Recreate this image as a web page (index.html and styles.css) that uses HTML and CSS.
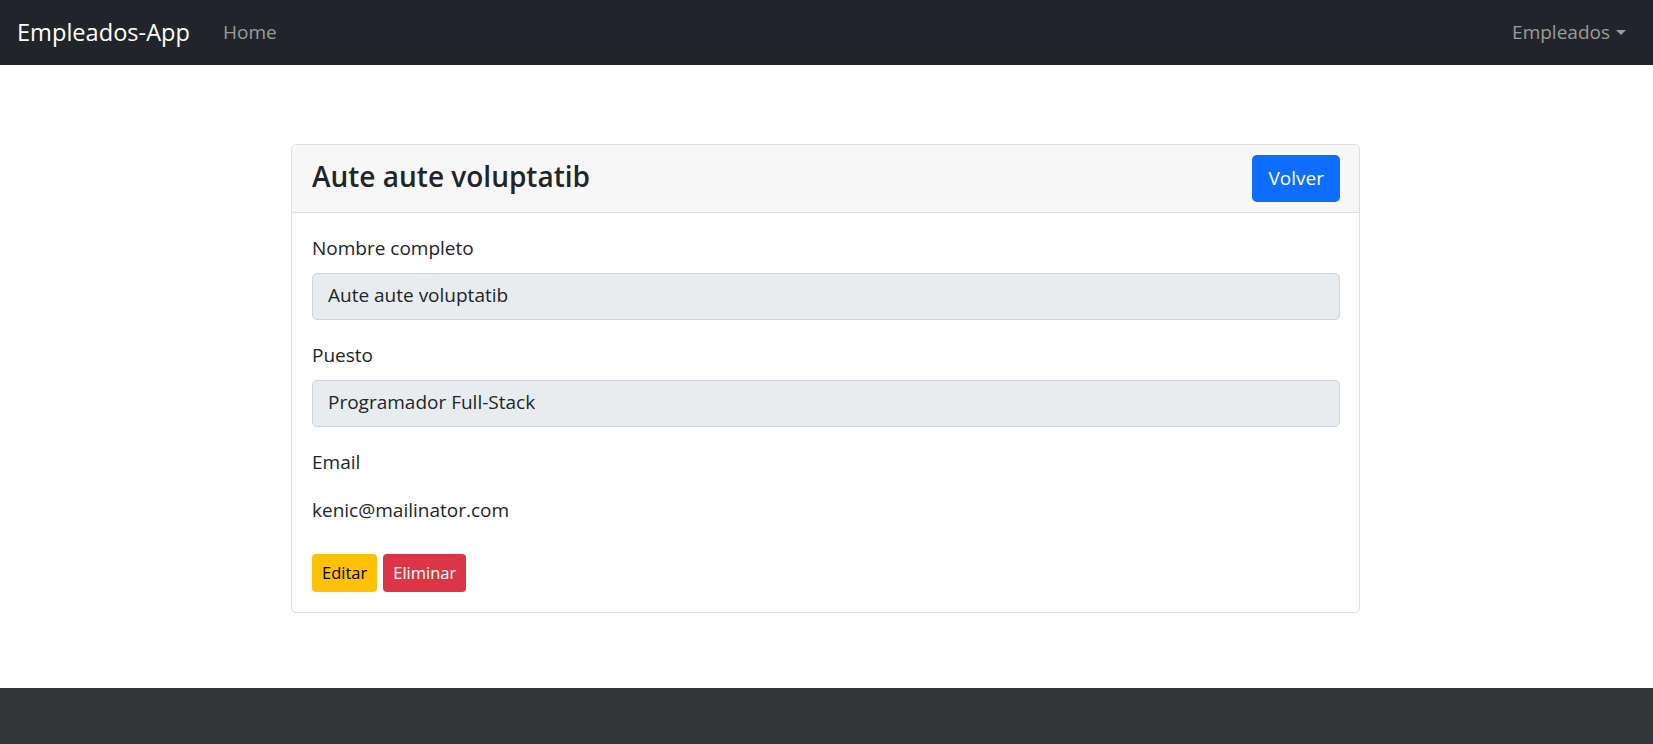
FILE: index.html
```html
<!DOCTYPE html>
<html lang="es">
<head>
<meta charset="utf-8">
<title>Empleados-App</title>
<link rel="stylesheet" href="styles.css">
</head>
<body>
<nav class="navbar">
  <div class="nav-left">
    <a class="brand" href="#">Empleados-App</a>
    <a class="nav-link" href="#">Home</a>
  </div>
  <div class="nav-right">
    <a class="nav-link dropdown" href="#">Empleados<span class="caret"></span></a>
  </div>
</nav>
<main class="main">
  <div class="card">
    <div class="card-header">
      <h4 class="card-title">Aute aute voluptatib</h4>
      <a class="btn btn-primary" href="#">Volver</a>
    </div>
    <div class="card-body">
      <div class="field">
        <label class="label">Nombre completo</label>
        <div class="input">Aute aute voluptatib</div>
      </div>
      <div class="field">
        <label class="label">Puesto</label>
        <div class="input">Programador Full-Stack</div>
      </div>
      <div class="field">
        <label class="label">Email</label>
        <p class="plaintext">kenic@mailinator.com</p>
      </div>
      <div class="actions">
        <a class="btn-sm btn-warning" href="#">Editar</a>
        <a class="btn-sm btn-danger" href="#">Eliminar</a>
      </div>
    </div>
  </div>
</main>
<footer class="footer"></footer>
</body>
</html>
```

FILE: styles.css
```css
* { box-sizing: border-box; }
html, body { margin: 0; padding: 0; }
body {
  font-family: "Open Sans", "Noto Sans", "Liberation Sans", sans-serif;
  font-size: 19px;
  line-height: 1.5;
  color: #212529;
  background: #fff;
}
a { text-decoration: none; }

.navbar {
  height: 65px;
  background: #212529;
  display: flex;
  align-items: center;
  justify-content: space-between;
  padding: 0 15px;
}
.nav-left { display: flex; align-items: center; }
.brand {
  color: #fff;
  font-size: 23.6px;
  padding-left: 2px;
  margin-right: 23px;
}
.nav-link {
  color: rgba(255,255,255,.55);
  font-size: 19px;
  padding: 10px;
}
.nav-right .nav-link { padding-right: 12px; }
.caret {
  display: inline-block;
  margin-left: 6px;
  vertical-align: 4px;
  border-top: 5px solid;
  border-left: 5px solid transparent;
  border-right: 5px solid transparent;
}

.main {
  padding: 79px 2px 75px 0;
}
.card {
  width: 1069px;
  margin: 0 auto;
  border: 1px solid #dfdfdf;
  border-radius: 5px;
}
.card-header {
  height: 68px;
  background: #f7f7f7;
  border-bottom: 1px solid #dfdfdf;
  border-radius: 5px 5px 0 0;
  display: flex;
  align-items: center;
  justify-content: space-between;
  padding: 0 19px 0 20px;
}
.card-title {
  margin: 0 0 4px;
  font-size: 28px;
  font-weight: 600;
  line-height: 1.2;
}
.btn {
  display: inline-block;
  font-size: 19px;
  line-height: 30px;
  padding: 8px 16px 9px 17px;
  border-radius: 5px;
}
.btn-primary { background: #0d6efd; color: #fff; }

.card-body { padding: 20px 19px 20px 20px; }
.field { margin-bottom: 20px; }
.label {
  display: block;
  height: 30px;
  padding-top: 1px;
  margin-bottom: 10px;
}
.input {
  height: 47px;
  padding: 7px 15px;
  background: #e9ecef;
  border: 1px solid #ced4da;
  border-radius: 5px;
}
.plaintext {
  margin: 0;
  height: 47px;
  padding: 7.5px 0;
  border: 1px solid transparent;
  border-width: 1px 0;
}
.actions { display: flex; gap: 6px; }
.btn-sm {
  display: inline-block;
  font-size: 16.5px;
  line-height: 26px;
  padding: 6px 10px;
  border-radius: 4px;
}
.btn-warning { background: #ffc107; color: #000; }
.btn-danger { background: #dc3545; color: #fff; }

.footer {
  height: 60px;
  background: #343537;
}
```
